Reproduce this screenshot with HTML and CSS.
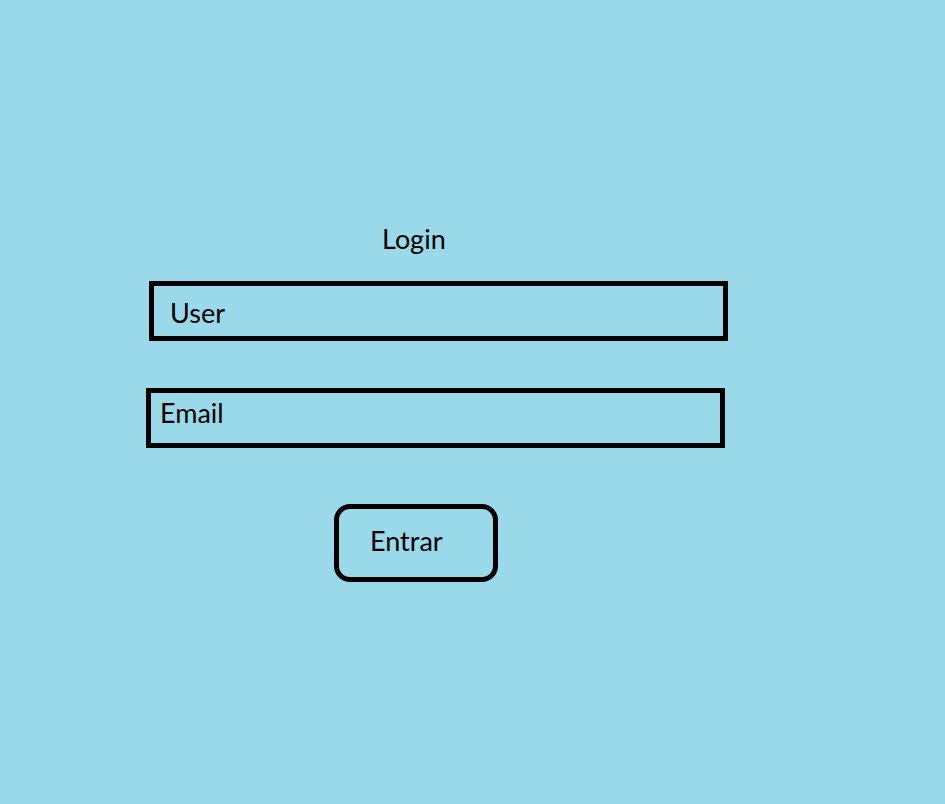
FILE: index.html
```html
<!DOCTYPE html>
<html lang="pt">
<head>
<meta charset="utf-8">
<title>Login</title>
<link rel="stylesheet" href="styles.css">
</head>
<body>
<main class="page">
  <h1 class="title">Login</h1>
  <div class="field field-user">User</div>
  <div class="field field-email">Email</div>
  <div class="button">Entrar</div>
</main>
</body>
</html>
```
FILE: styles.css
```css
html, body {
  margin: 0;
  padding: 0;
  background: #99d9ea;
}
body {
  width: 945px;
  height: 804px;
  overflow: hidden;
  font-family: Lato, "Open Sans", sans-serif;
  font-size: 27px;
  line-height: 32px;
  color: #000;
}
.page {
  display: flex;
  flex-direction: column;
  align-items: flex-start;
  padding-top: 223px;
}
.title {
  margin: 0 0 0 382px;
  font-size: 27px;
  font-weight: normal;
  line-height: 32px;
}
.field {
  box-sizing: border-box;
  width: 579px;
  height: 60px;
  border: 5px solid #000;
}
.field-user {
  margin: 26px 0 0 149px;
  padding: 11px 0 0 16px;
}
.field-email {
  margin: 47px 0 0 146px;
  padding: 4px 0 0 9px;
}
.button {
  box-sizing: border-box;
  width: 164px;
  height: 78px;
  margin: 56px 0 0 334px;
  padding: 16px 0 0 31px;
  border: 5px solid #000;
  border-radius: 16px;
}
```
